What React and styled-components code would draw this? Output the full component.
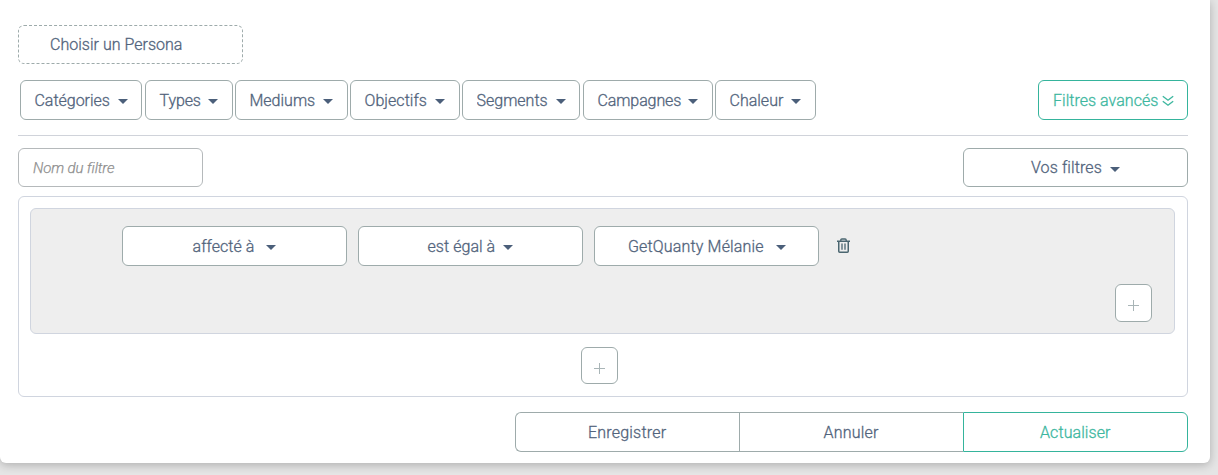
import React from "react";
import styled, { createGlobalStyle } from "styled-components";

const GlobalStyle = createGlobalStyle`
  * { box-sizing: border-box; }
  body {
    margin: 0;
    height: 475px;
    overflow: hidden;
    background: #e5e5e5;
    font-family: Roboto, "Liberation Sans", sans-serif;
    font-size: 16px;
    color: #52647c;
  }
`;

const Panel = styled.main`
  width: 1210px;
  height: 463px;
  padding: 25px 22px 0 18px;
  background: #fff;
  border-radius: 0 0 6px 6px;
  box-shadow: 0 2px 10px rgba(0, 0, 0, 0.24);
`;

const Label = styled.span`
  flex: none;
  width: ${(p) => p.$width}px;
  height: ${(p) => (p.$clip ? 18 : 20)}px;
  margin-bottom: ${(p) => (p.$clip ? 2 : 0)}px;
  overflow: ${(p) => (p.$clip ? "hidden" : "visible")};
  letter-spacing: ${(p) => p.$spacing || 0}px;
  text-align: left;
  white-space: nowrap;
  -webkit-text-stroke: 0.3px currentColor;
`;

const Button = styled.button`
  display: flex;
  align-items: center;
  justify-content: ${(p) => (p.$inset ? "flex-start" : "center")};
  flex: none;
  width: ${(p) => p.$width}px;
  height: ${(p) => p.$height || 40}px;
  margin: 0;
  padding: 0 0 0 ${(p) => p.$inset || 0}px;
  border: 1px ${(p) => (p.$dashed ? "dashed" : "solid")} ${(p) => (p.$accent ? "#35b49c" : "#9eabab")};
  border-radius: 6px;
  background: #fff;
  color: ${(p) => (p.$accent ? "#3db79f" : "#52647c")};
  font: inherit;
  font-weight: 300;
  line-height: 20px;

  ${Label} {
    margin-top: ${(p) => (p.$height ? 0 : 2)}px;
  }
`;

const Caret = styled.span`
  flex: none;
  width: 0;
  height: 0;
  margin: ${(p) => p.$top ?? 3}px 0 0 ${(p) => p.$gap || 8}px;
  border: 5px solid transparent;
  border-top-color: #4b5f7a;
  border-bottom: 0;
`;

const Toolbar = styled.div`
  display: flex;
  align-items: center;
  justify-content: space-between;
  height: 56px;
  margin-top: 16px;
  padding: 0 0 16px 2px;
  border-bottom: 1px solid #d0d3da;
`;

const FilterList = styled.div`
  display: flex;
`;

const FilterItem = styled.div`
  margin-right: ${(p) => p.$after}px;
`;

const ChevronIcon = styled.svg`
  flex: none;
  width: 12px;
  height: 12px;
  margin: 3px 0 0 3px;
`;

const NameRow = styled.div`
  display: flex;
  justify-content: space-between;
  margin-top: 12px;
`;

const NameInput = styled.input`
  width: 185px;
  height: 39px;
  padding: 0 14px;
  border: 1px solid #b5b9bb;
  border-radius: 6px;
  background: #fff;
  font: italic 300 15px Roboto, sans-serif;
  letter-spacing: -0.13px;
  -webkit-text-stroke: 0.25px currentColor;
  &::placeholder { color: #8f8f8f; opacity: 1; }
`;

const RuleBuilder = styled.section`
  display: flex;
  flex-direction: column;
  align-items: center;
  height: 201px;
  margin-top: 9px;
  padding: 11px 12px 0 11px;
  border: 1px solid #d0d5df;
  border-radius: 6px;
`;

const RuleGroup = styled.div`
  display: flex;
  flex-direction: column;
  align-self: stretch;
  height: 126px;
  padding: 17px 22px 0 91px;
  border: 1px solid #d0d5df;
  border-radius: 6px;
  background: #eee;
`;

const RuleRow = styled.div`
  display: flex;
  align-items: center;
  gap: 11px;
`;

const TrashIcon = styled.svg`
  width: 13px;
  height: 15px;
  margin: 0 0 2px 7px;
`;

const AddButton = styled.button`
  display: grid;
  place-items: center;
  align-self: ${(p) => (p.$end ? "flex-end" : "center")};
  width: 37px;
  height: ${(p) => (p.$end ? 38 : 37)}px;
  margin: ${(p) => (p.$end ? "18px 0 0" : "13px 6px 0 0")};
  padding: ${(p) => (p.$end ? 4 : 5)}px 1px 0 0;
  border: 1px solid #9eabab;
  border-radius: 6px;
  background: #fff;
`;

const Actions = styled.footer`
  display: flex;
  justify-content: flex-end;
  margin-top: 15px;
`;

const ActionButton = styled(Button)`
  border-radius: ${(p) => (p.$first ? "6px 0 0 6px" : p.$accent ? "0 6px 6px 0" : "0")};
  border-right-width: ${(p) => (p.$accent ? 1 : 0)}px;
`;

const filters = [
  { text: "Catégories", width: 122, label: 75, after: 3, spacing: -0.02 },
  { text: "Types", width: 88, label: 40, after: 2, spacing: -0.1 },
  { text: "Mediums", width: 113, label: 65, after: 2, spacing: 0 },
  { text: "Objectifs", width: 110, label: 62, after: 2, spacing: 0.05 },
  { text: "Segments", width: 118, label: 71, after: 3, spacing: 0, clip: true },
  { text: "Campagnes", width: 130, label: 82, after: 2, spacing: -0.1 },
  { text: "Chaleur", width: 101, label: 53, after: 0, spacing: 0 },
];

const rules = [
  { text: "affecté à", inset: 69.5, label: 61.5, spacing: 0.05, gap: 12 },
  { text: "est égal à", inset: 68.5, label: 67.5, spacing: 0.05, gap: 8 },
  { text: "GetQuanty Mélanie", inset: 33, label: 137, spacing: 0.16, gap: 11 },
];

function Plus() {
  return (
    <svg width="12" height="12" fill="none" stroke="#a9b5b7">
      <path d="M6.5 1v11M1 6.5h11" />
    </svg>
  );
}

export default function App() {
  return (
    <>
      <GlobalStyle />
      <Panel>
        <Button $dashed $width={225} $height={39} $inset={31}>
          <Label $width={132} $spacing={0.02}>Choisir un Persona</Label>
        </Button>

        <Toolbar>
          <FilterList>
            {filters.map((f) => (
              <FilterItem key={f.text} $after={f.after}>
                <Button $width={f.width} $inset={13.5}>
                  <Label $width={f.label} $spacing={f.spacing} $clip={f.clip}>{f.text}</Label>
                  <Caret $top={f.clip ? 4 : 3} />
                </Button>
              </FilterItem>
            ))}
          </FilterList>
          <Button $accent $width={150} $inset={14}>
            <Label $width={106} $spacing={0.03}>Filtres avancés</Label>
            <ChevronIcon viewBox="0 0 12 12" fill="none" stroke="currentColor" strokeWidth="1.4">
              <path d="M.8 1.2 6 5.2l5.2-4M.8 6.2l5.2 4 5.2-4" />
            </ChevronIcon>
          </Button>
        </Toolbar>

        <NameRow>
          <NameInput placeholder="Nom du filtre" />
          <Button $width={225} $height={39} $inset={67}>
            <Label $width={71} $spacing={0.1}>Vos filtres</Label>
            <Caret $top={4} />
          </Button>
        </NameRow>

        <RuleBuilder>
          <RuleGroup>
            <RuleRow>
              {rules.map((r) => (
                <Button key={r.text} $width={225} $inset={r.inset}>
                  <Label $width={r.label} $spacing={r.spacing}>{r.text}</Label>
                  <Caret $gap={r.gap} />
                </Button>
              ))}
              <TrashIcon viewBox="0 0 13 15" fill="none" stroke="#4b6670">
                <path d="M0 3.25h13" strokeWidth="1.5" />
                <path d="M3.8 3V2.1Q3.8 1 4.9 1h3.2q1.1 0 1.1 1.1V3" strokeWidth="1.3" />
                <path d="M1.75 3.5v9.8q0 .95.95.95h7.6q.95 0 .95-.95V3.5" strokeWidth="1.5" />
                <path d="M5 5.5v6.2M8 5.5v6.2" strokeWidth="1.3" />
              </TrashIcon>
            </RuleRow>
            <AddButton $end aria-label="Ajouter une condition"><Plus /></AddButton>
          </RuleGroup>
          <AddButton aria-label="Ajouter un groupe"><Plus /></AddButton>
        </RuleBuilder>

        <Actions>
          <ActionButton $first $width={224} $inset={72}><Label $width={80} $spacing={0.2}>Enregistrer</Label></ActionButton>
          <ActionButton $width={224} $inset={83.5}><Label $width={56} $spacing={0.2}>Annuler</Label></ActionButton>
          <ActionButton $accent $width={225} $inset={76}><Label $width={71} $spacing={0.08}>Actualiser</Label></ActionButton>
        </Actions>
      </Panel>
    </>
  );
}
